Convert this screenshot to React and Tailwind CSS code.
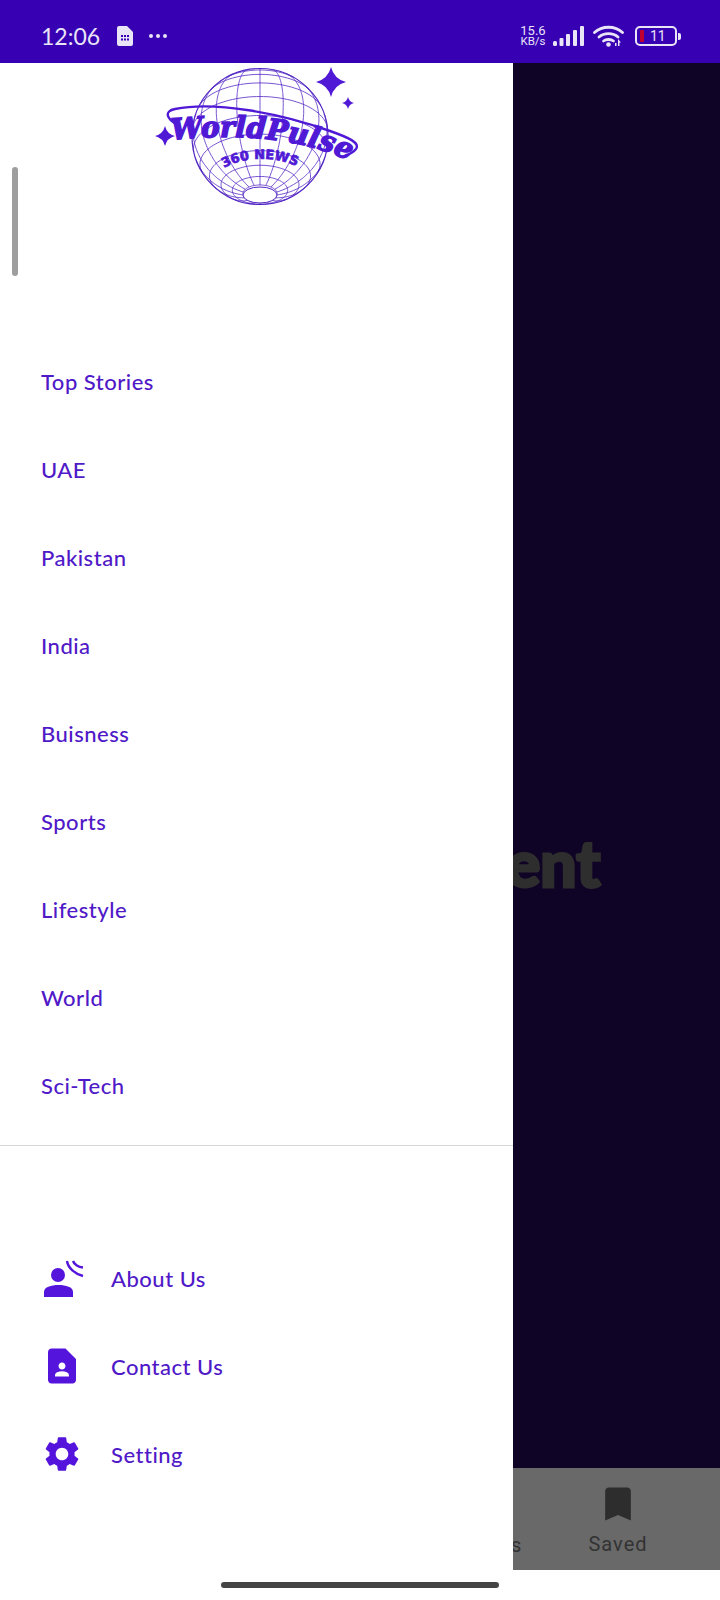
import { MdContactPage, MdSettings, MdBookmark } from 'react-icons/md';

const MENU = ['Top Stories', 'UAE', 'Pakistan', 'India', 'Buisness', 'Sports', 'Lifestyle', 'World', 'Sci-Tech'];

// Orthographic globe, tilted so the south pole ring faces the viewer
const CX = 260;
const CY = 135.5;
const R = 68;
const TILT = (-30 * Math.PI) / 180;

function project(lat, lon) {
  const x = Math.cos(lat) * Math.sin(lon);
  const y = Math.sin(lat);
  const z = Math.cos(lat) * Math.cos(lon);
  const Y = y * Math.cos(TILT) - z * Math.sin(TILT);
  const Z = y * Math.sin(TILT) + z * Math.cos(TILT);
  return { x: CX + R * x, y: CY - R * Y, on: Z >= -0.001 };
}

function linePath(points) {
  let d = '';
  let pen = false;
  points.forEach((p) => {
    if (!p.on) {
      pen = false;
      return;
    }
    d += `${pen ? 'L' : 'M'}${p.x.toFixed(1)} ${p.y.toFixed(1)}`;
    pen = true;
  });
  return d;
}

const rad = (deg) => (deg * Math.PI) / 180;
const steps = Array.from({ length: 121 }, (_, i) => i);

const LATITUDES = [-75.5, -66, -55, -42, -28, -12, 6, 22, 36, 48, 60].map((lat) =>
  linePath(steps.map((i) => project(rad(lat), rad(i * 3 - 180))))
);
const MERIDIANS = Array.from({ length: 18 }, (_, k) => k * 20 - 180).map((lon) =>
  linePath(steps.map((i) => project(rad(-75.5 + (i / 120) * 155.5), rad(lon))))
);

function Sparkle({ x, y, r }) {
  const k = r * 0.2;
  return (
    <path
      d={`M${x} ${y - r}Q${x + k} ${y - k} ${x + r} ${y}Q${x + k} ${y + k} ${x} ${y + r}Q${x - k} ${y + k} ${x - r} ${y}Q${x - k} ${y - k} ${x} ${y - r}Z`}
      fill="#5019d6"
    />
  );
}

function Logo() {
  return (
    <svg viewBox="150 62 215 150" className="w-[215px] h-[150px] ml-[150px] block">
      <circle cx={CX} cy={CY} r={R} fill="white" stroke="#5226c4" strokeWidth="1.2" />
      <g fill="none" stroke="#5226c4" strokeWidth="0.8">
        {LATITUDES.map((d, i) => <path key={i} d={d} />)}
        {MERIDIANS.map((d, i) => <path key={i} d={d} />)}
      </g>
      <ellipse cx="260" cy="194" rx="17" ry="8" fill="white" stroke="#5226c4" strokeWidth="1" />
      <path
        d="M178 124C166 118 164 110 175 108C215 100 280 112 330 130C350 137 360 142 356 148C353 152 348 154 342 156"
        fill="none"
        stroke="#5019d6"
        strokeWidth="2.4"
      />
      <Sparkle x={331} y={81} r={15} />
      <Sparkle x={348} y={102} r={6} />
      <Sparkle x={165} y={135} r={10} />
      <defs>
        <path id="logo-title" d="M172 139C220 134 290 132 350 160" />
        <path id="logo-sub" d="M224 167C245 155 275 155 298 166" />
      </defs>
      <text
        fontFamily="'DejaVu Serif', serif"
        fontWeight="700"
        fontStyle="italic"
        fontSize="29"
        fill="#5019d6"
        stroke="#5019d6"
        strokeWidth="1.5"
        textLength="180"
        lengthAdjust="spacingAndGlyphs"
      >
        <textPath href="#logo-title">WorldPulse</textPath>
      </text>
      <text fontFamily="'DejaVu Sans', sans-serif" fontWeight="700" fontSize="13" fill="#5019d6" stroke="#5019d6" strokeWidth="0.7">
        <textPath href="#logo-sub">360 NEWS</textPath>
      </text>
    </svg>
  );
}

function VoiceIcon() {
  return (
    <svg viewBox="0 0 40 38" className="w-[40px] h-[38px]">
      <circle cx="14" cy="16" r="7" fill="#5514dc" />
      <path d="M0 38v-5c0-5 7-7 14.500-7S29 28 29 33v5Z" fill="#5514dc" />
      <path d="M23 2C24 9 31 15 39 17" fill="none" stroke="#5514dc" strokeWidth="2.400" />
      <path d="M29 2C30 5 34 8 39 8.500" fill="none" stroke="#5514dc" strokeWidth="2.400" />
    </svg>
  );
}

function StatusBar() {
  return (
    <div className="h-[63px] shrink-0 bg-[#3700b3] flex items-center text-[#e9e4f6] pl-[41px] pr-[39px] pt-[9px]">
      <span className="text-[23px] leading-none font-['Lato',sans-serif]">12:06</span>
      <svg viewBox="0 0 16 20" className="w-[16px] h-[20px] ml-[17px]">
        <path d="M2 0h8l6 6v12a2 2 0 0 1-2 2H2a2 2 0 0 1-2-2V2a2 2 0 0 1 2-2Z" fill="#e9e4f6" />
        <g fill="#3700b3">
          <rect x="4" y="9" width="2" height="2" />
          <rect x="7" y="9" width="2" height="2" />
          <rect x="10" y="9" width="2" height="2" />
          <rect x="4" y="12.500" width="2" height="2" />
          <rect x="7" y="12.500" width="2" height="2" />
          <rect x="10" y="12.500" width="2" height="2" />
        </g>
      </svg>
      <div className="flex gap-[3px] ml-[16px] mb-[1px]">
        <span className="w-[4px] h-[4px] rounded-full bg-[#e9e4f6]" />
        <span className="w-[4px] h-[4px] rounded-full bg-[#e9e4f6]" />
        <span className="w-[4px] h-[4px] rounded-full bg-[#e9e4f6]" />
      </div>
      <div className="ml-auto flex items-center">
        <div className="flex flex-col items-center text-[11.500px] leading-[11px] font-['Roboto',sans-serif] w-[28px]">
          <span className="text-[13px]">15.6</span>
          <span>KB/s</span>
        </div>
        <svg viewBox="0 0 31 20" className="w-[31px] h-[20px] ml-[6px]">
          <g fill="#e9e4f6">
            <rect x="0" y="15" width="4" height="5" rx="1.500" />
            <rect x="6.500" y="12" width="4" height="8" rx="1" />
            <rect x="13" y="8" width="4" height="12" rx="1" />
            <rect x="20" y="4" width="4" height="16" rx="1" />
            <rect x="27" y="0" width="4" height="20" rx="1" />
          </g>
        </svg>
        <svg viewBox="0 0 32 22" className="w-[32px] h-[22px] ml-[9px]">
          <g fill="none" stroke="#e9e4f6" strokeWidth="2.800" strokeLinecap="round">
            <path d="M1.500 7.500C9 0.500 22 0.500 29.500 7.500" />
            <path d="M6 12C11 7.500 20 7.500 25 12" />
            <path d="M10.500 16C13 14 18 14 20.500 16" />
          </g>
          <circle cx="15.500" cy="19.500" r="2.300" fill="#e9e4f6" />
          <path d="M22 21v-3h1.500v3ZM25 21v-7l3 3.500h-1.500V21Z" fill="#e9e4f6" />
        </svg>
        <div className="ml-[10px] flex items-center">
          <div className="w-[42px] h-[20px] border-2 border-[#e9e4f6] rounded-[5px] flex items-center pl-[3px]">
            <span className="w-[4px] h-[12px] bg-[#c2002f] rounded-[1px]" />
            <span className="ml-[6px] text-[14px] leading-none font-['Roboto',sans-serif]">11</span>
          </div>
          <span className="w-[3px] h-[7px] bg-[#e9e4f6] rounded-r-[2px] ml-[1px]" />
        </div>
      </div>
    </div>
  );
}

function Drawer() {
  const rowText = "text-[22px] font-medium tracking-[0.5px] text-[#5019c8] font-['Lato',sans-serif]";
  return (
    <aside className="relative w-[513px] shrink-0 bg-white flex flex-col">
      <div className="absolute left-[12px] top-[104px] w-[6px] h-[109px] rounded-full bg-[#9e9e9e]" />
      <div className="h-[274px] shrink-0">
        <Logo />
      </div>
      <nav className="flex flex-col">
        {MENU.map((item) => (
          <div key={item} className={`h-[88px] flex items-center pl-[41px] ${rowText}`}>
            {item}
          </div>
        ))}
      </nav>
      <div className="mt-[16px] h-px bg-[#d6d6d6]" />
      <div className="mt-[88px] flex flex-col">
        <div className={`h-[88px] flex items-center pl-[44px] ${rowText}`}>
          <VoiceIcon />
          <span className="ml-[27px]">About Us</span>
        </div>
        <div className={`h-[88px] flex items-center pl-[41px] ${rowText}`}>
          <MdContactPage className="w-[42px] h-[42px] text-[#5514dc]" />
          <span className="ml-[28px]">Contact Us</span>
        </div>
        <div className={`h-[88px] flex items-center pl-[41px] ${rowText}`}>
          <MdSettings className="w-[42px] h-[42px] text-[#5514dc]" />
          <span className="ml-[28px]">Setting</span>
        </div>
      </div>
    </aside>
  );
}

function Behind() {
  return (
    <div className="flex-1 min-w-0 flex flex-col overflow-hidden">
      <div className="flex-1 bg-[#0f0326] flex items-center pt-[194px] overflow-hidden">
        <span className="-ml-[7px] text-[64px] leading-none font-black text-[#2f2e2e] [-webkit-text-stroke:3px_#2f2e2e] font-['Lato',sans-serif]">ent</span>
      </div>
      <div className="h-[102px] shrink-0 bg-[#696969] flex text-[#333333] text-[20px] tracking-[1px] font-['Roboto',sans-serif]">
        <span className="w-[10px] -ml-[2px] pt-[62px] leading-[30px] overflow-hidden">s</span>
        <div className="w-[194px] flex flex-col items-center pt-[14px]">
          <MdBookmark className="w-[44px] h-[44px] text-[#2d2d2d]" />
          <span className="mt-[3px] leading-[30px]">Saved</span>
        </div>
      </div>
    </div>
  );
}

export default function App() {
  return (
    <div className="w-[720px] h-[1600px] flex flex-col bg-white overflow-hidden">
      <StatusBar />
      <div className="flex-1 min-h-0 flex">
        <Drawer />
        <Behind />
      </div>
      <div className="h-[30px] shrink-0 bg-white flex justify-center pt-[12px]">
        <span className="w-[278px] h-[6px] rounded-full bg-[#444444]" />
      </div>
    </div>
  );
}
